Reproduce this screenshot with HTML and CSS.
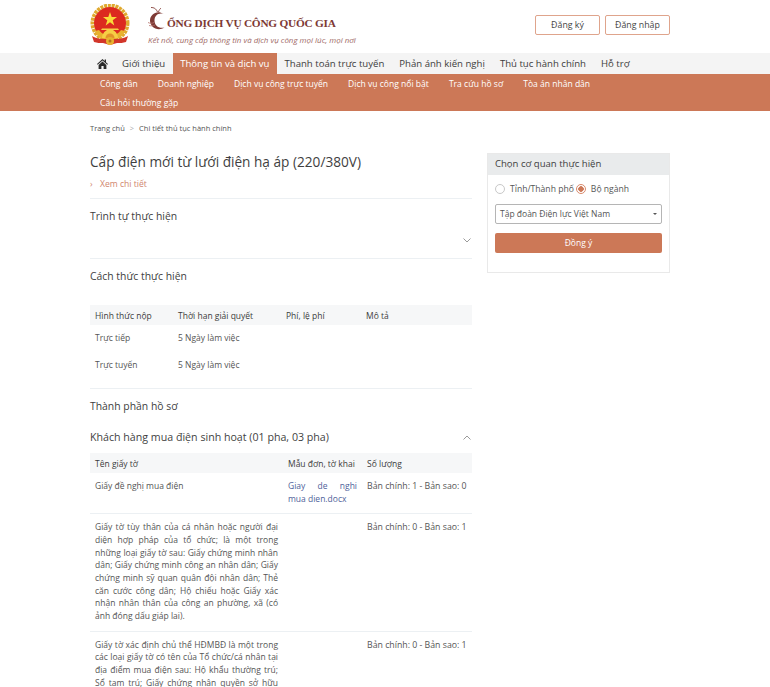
FILE: index.html
```html
<!DOCTYPE html>
<html lang="vi">
<head>
    <meta charset="UTF-8">
    <meta name="viewport" content="width=device-width, initial-scale=1.0">
    <title>Cổng Dịch vụ công Quốc gia</title>
    <link rel="stylesheet" href="styles.css">
</head>
<body>
<header class="top container">
    <div class="brand">
        <svg class="emblem" width="40" height="42" viewBox="0 0 40 42">
            <circle cx="20" cy="19" r="17.500" fill="none" stroke="#e0a92e" stroke-width="4" stroke-dasharray="3 .8"/>
            <circle cx="20" cy="19" r="16" fill="#dc2a1f"/>
            <path d="M5 27c2 5 6 9 15 9s13-4 15-9l-4-1c-2 3-5 5-11 5s-9-2-11-5z" fill="#e8b32f"/>
            <polygon points="20,8 21.700,13.100 27,13.100 22.700,16.300 24.300,21.400 20,18.300 15.700,21.400 17.300,16.300 13,13.100 18.300,13.100" fill="#f9dc3a"/>
            <path d="M12 34a8 8.500 0 0 1 16 0z" fill="#f6cf45"/>
            <path d="M15.500 34a4.500 4.500 0 0 1 9 0z" fill="#e2932a"/>
            <path d="M12 24.500h16l1 1.500H11z" fill="#f6cf45"/>
            <path d="M2 32c5 3 10 3 18 3s13 0 18-3l-2 6c-3 1-6 1-9 1l-7 2-7-2c-3 0-6 0-9-1z" fill="#d2362a"/>
            <circle cx="20" cy="37" r="4" fill="#e8b32f"/>
            <circle cx="20" cy="37" r="1.500" fill="#b5741c"/>
        </svg>
        <div class="brand-text">
            <div class="brand-name">
                <svg class="brand-mark" width="18" height="25" viewBox="0 0 18 25">
                    <path d="M15.500 7C9.500 2.500 2 7 2 13.500 2 20 9.500 25 16.500 20.500 11 22 6.500 18.500 6.500 13.500 6.500 8.500 10.500 5.500 15.500 7z" fill="#7e3a35"/>
                    <path d="M3 .5c3 0 5 1 6.500 4.500M13 1c-1 1-2 2-2.500 4" fill="none" stroke="#8f4f49" stroke-width="1"/>
                    <path d="M0 15.500c2 1 4 1 6 0M1 18.500c2 .5 4 .5 6-.5" fill="none" stroke="#b5706a" stroke-width=".8"/>
                </svg>
                <span>ỔNG DỊCH VỤ CÔNG QUỐC GIA</span>
            </div>
            <div class="brand-slogan">Kết nối, cung cấp thông tin và dịch vụ công mọi lúc, mọi nơi</div>
        </div>
    </div>
    <div class="auth">
        <a class="auth-btn" href="#">Đăng ký</a>
        <a class="auth-btn" href="#">Đăng nhập</a>
    </div>
</header>

<nav class="main-nav">
    <div class="container nav-row">
        <a class="nav-home" href="#">
            <svg width="11" height="10" viewBox="0 0 11 10"><path d="M5.5 0 0 5l.7.8L5.5 1.6l4.8 4.2.7-.8L9 3.2V.6H7.7V2zM1.6 6v4h2.8V7h2.2v3h2.8V6L5.500 2.600z" fill="#2b2b2b"/></svg>
        </a>
        <a href="#">Giới thiệu</a>
        <a class="active" href="#">Thông tin và dịch vụ</a>
        <a href="#">Thanh toán trực tuyến</a>
        <a href="#">Phản ánh kiến nghị</a>
        <a href="#">Thủ tục hành chính</a>
        <a href="#">Hỗ trợ</a>
    </div>
</nav>
<div class="sub-nav">
    <div class="container sub-row">
        <a href="#">Công dân</a>
        <a href="#">Doanh nghiệp</a>
        <a href="#">Dịch vụ công trực tuyến</a>
        <a href="#">Dịch vụ công nổi bật</a>
        <a href="#">Tra cứu hồ sơ</a>
        <a href="#">Tòa án nhân dân</a>
        <a class="sub-last" href="#">Câu hỏi thường gặp</a>
    </div>
</div>

<div class="container breadcrumb">
    <a href="#">Trang chủ</a><span class="sep">&gt;</span><a href="#">Chi tiết thủ tục hành chính</a>
</div>

<div class="container content">
    <main class="main-col">
        <h1>Cấp điện mới từ lưới điện hạ áp (220/380V)</h1>
        <a class="more" href="#"><span class="more-arrow">›</span>Xem chi tiết</a>

        <section class="block block-first">
            <h2>Trình tự thực hiện</h2>
            <div class="toggle-row">
                <svg width="8" height="5" viewBox="0 0 8 5"><path d="M.5.5 4 4 7.500.5" fill="none" stroke="#9a9a9a"/></svg>
            </div>
        </section>

        <section class="block">
            <h2>Cách thức thực hiện</h2>
            <table class="grid grid-ways">
                <thead>
                    <tr><th class="w1">Hình thức nộp</th><th class="w2">Thời hạn giải quyết</th><th class="w3">Phí, lệ phí</th><th>Mô tả</th></tr>
                </thead>
                <tbody>
                    <tr><td>Trực tiếp</td><td>5 Ngày làm việc</td><td></td><td></td></tr>
                    <tr><td>Trực tuyến</td><td>5 Ngày làm việc</td><td></td><td></td></tr>
                </tbody>
            </table>
        </section>

        <section class="block block-docs">
            <h2>Thành phần hồ sơ</h2>
            <div class="case-head">
                <h3>Khách hàng mua điện sinh hoạt (01 pha, 03 pha)</h3>
                <svg width="8" height="5" viewBox="0 0 8 5"><path d="M.5 4.500 4 1l3.500 3.500" fill="none" stroke="#9a9a9a"/></svg>
            </div>
            <table class="grid grid-docs">
                <thead>
                    <tr><th class="d1">Tên giấy tờ</th><th class="d2">Mẫu đơn, tờ khai</th><th>Số lượng</th></tr>
                </thead>
                <tbody>
                    <tr>
                        <td class="just">Giấy đề nghị mua điện</td>
                        <td><a class="file-link" href="#"><span class="file-first">Giay de nghi</span> mua dien.docx</a></td>
                        <td class="qty">Bản chính: 1 - Bản sao: 0</td>
                    </tr>
                    <tr>
                        <td class="just">Giấy tờ tùy thân của cá nhân hoặc người đại diện hợp pháp của tổ chức; là một trong những loại giấy tờ sau: Giấy chứng minh nhân dân; Giấy chứng minh công an nhân dân; Giấy chứng minh sỹ quan quân đội nhân dân; Thẻ căn cước công dân; Hộ chiếu hoặc Giấy xác nhận nhân thân của công an phường, xã (có ảnh đóng dấu giáp lai).</td>
                        <td></td>
                        <td class="qty">Bản chính: 0 - Bản sao: 1</td>
                    </tr>
                    <tr>
                        <td class="just">Giấy tờ xác định chủ thể HĐMBĐ là một trong các loại giấy tờ có tên của Tổ chức/cá nhân tại địa điểm mua điện sau: Hộ khẩu thường trú; Sổ tạm trú; Giấy chứng nhận quyền sở hữu nhà ở.</td>
                        <td></td>
                        <td class="qty">Bản chính: 0 - Bản sao: 1</td>
                    </tr>
                </tbody>
            </table>
        </section>
    </main>

    <aside class="side-card">
        <div class="side-title">Chọn cơ quan thực hiện</div>
        <div class="side-body">
            <div class="radios">
                <label class="radio"><span class="dot"></span>Tỉnh/Thành phố</label>
                <label class="radio"><span class="dot dot-on"></span>Bộ ngành</label>
            </div>
            <div class="select">Tập đoàn Điện lực Việt Nam<span class="caret"></span></div>
            <a class="agree" href="#">Đồng ý</a>
        </div>
    </aside>
</div>
</body>
</html>
```

FILE: styles.css
```css
:root {
    --brand-color: #cc7857;
    --text-color: #555;
    --line-color: #ecf0f3;
    --head-bg: #f6f7f8;
}

* {
    margin: 0;
    padding: 0;
    box-sizing: border-box;
}

html {
    height: 687px;
    overflow: hidden;
}

body {
    font-family: 'Open Sans', 'Noto Sans', sans-serif;
    font-size: 8.500px;
    color: var(--text-color);
    background: #fff;
}

a {
    color: inherit;
    text-decoration: none;
}

.container {
    width: 580px;
    margin-left: 90px;
}

/* header */
.top {
    height: 53px;
    display: flex;
    justify-content: space-between;
    align-items: flex-start;
}

.brand {
    display: flex;
    padding-top: 4px;
}

.emblem {
    margin-right: 18px;
}

.brand-text {
    padding-top: 3px;
}

.brand-name {
    display: flex;
    align-items: flex-end;
    height: 25px;
    font-family: 'Liberation Serif', serif;
    font-size: 11.300px;
    font-weight: 700;
    letter-spacing: -0.24px;
    color: #7e3a35;
}

.brand-name span {
    margin-bottom: 3px;
    white-space: nowrap;
}

.brand-mark {
    margin-right: 1px;
}

.brand-slogan {
    margin-top: 3px;
    font-size: 7.950px;
    font-style: italic;
    color: #a06a66;
    white-space: nowrap;
}

.auth {
    display: flex;
    gap: 5px;
    padding-top: 15px;
}

.auth-btn {
    width: 65px;
    height: 20px;
    border: 1px solid #dfa48c;
    border-radius: 2px;
    display: flex;
    align-items: center;
    justify-content: center;
    font-size: 8.800px;
    color: #444;
}

/* nav */
.main-nav {
    background: #f4f4f4;
    height: 21px;
}

.nav-row {
    display: flex;
    height: 21px;
    font-size: 9.600px;
    line-height: 21px;
    color: #3c3c3c;
    white-space: nowrap;
}

.nav-row a {
    padding: 0 7.500px;
}

.nav-row .nav-home {
    padding: 0 0 0 7px;
    width: 24.500px;
    display: flex;
    align-items: center;
}

.nav-row .active {
    background: var(--brand-color);
    color: #fff;
}

.sub-nav {
    background: var(--brand-color);
    height: 37px;
    padding-top: 1px;
}

.sub-row {
    display: flex;
    flex-wrap: wrap;
    font-size: 8.550px;
    line-height: 18.500px;
    color: #fff;
    padding-left: 10px;
    column-gap: 20px;
    white-space: nowrap;
}

.sub-last {
    flex-basis: 100%;
}

/* breadcrumb */
.breadcrumb {
    padding-top: 11px;
    height: 42px;
    font-size: 7.500px;
    line-height: 12px;
}

.sep {
    margin: 0 5px;
    color: #aaa;
}

/* content */
.content {
    display: flex;
    justify-content: space-between;
    align-items: flex-start;
}

.main-col {
    width: 382px;
}

h1 {
    font-size: 13.650px;
    font-weight: 400;
    line-height: 18px;
    color: #3f3f3f;
}

.more {
    display: block;
    margin-top: 6px;
    font-size: 8.600px;
    line-height: 14px;
    color: #d0866d;
}

.more-arrow {
    display: inline-block;
    width: 10px;
}

.block {
    border-top: 1px solid var(--line-color);
    padding-top: 10px;
}

.block-first {
    margin-top: 7px;
    height: 60px;
}

h2 {
    font-size: 10.400px;
    font-weight: 400;
    line-height: 14px;
    color: #3f3f3f;
}

.toggle-row {
    display: flex;
    justify-content: flex-end;
    padding: 15px 1px 0 0;
}

.grid {
    width: 382px;
    border-collapse: collapse;
    table-layout: fixed;
}

.grid th {
    background: var(--head-bg);
    font-weight: 400;
    text-align: left;
    color: #3c3c3c;
    padding: 0 5px;
    height: 20px;
    white-space: nowrap;
}

.grid td {
    vertical-align: top;
    padding: 0 5px;
    line-height: 12.670px;
}

.grid-ways {
    margin-top: 22px;
    margin-bottom: 9px;
}

.grid-ways td {
    height: 27px;
    padding-top: 7px;
}

.w1 { width: 83px; }
.w2 { width: 108px; }
.w3 { width: 80px; }

.case-head {
    display: flex;
    justify-content: space-between;
    align-items: center;
    margin-top: 17px;
    padding-right: 1px;
}

h3 {
    font-size: 10.650px;
    font-weight: 400;
    line-height: 14px;
    color: #3f3f3f;
}

.grid-docs {
    margin-top: 9px;
}

.d1 { width: 193px; }
.d2 { width: 79px; }

.grid-docs tbody tr {
    border-bottom: 1px solid var(--line-color);
}

.grid-docs td {
    padding-top: 7px;
    padding-bottom: 8px;
}

.grid-docs .qty {
    white-space: nowrap;
    font-size: 8.750px;
}

.just {
    text-align: justify;
}

.file-link {
    color: #4f5f9a;
}

.file-first {
    display: block;
    text-align: justify;
    text-align-last: justify;
}

/* side card */
.side-card {
    width: 183px;
    height: 120px;
    border: 1px solid #e9e9e9;
}

.side-title {
    height: 21px;
    background: #e9ebec;
    padding-left: 7px;
    font-size: 9.550px;
    line-height: 19px;
    color: #3f3f3f;
}

.side-body {
    padding: 0 7px;
}

.radios {
    display: flex;
    height: 28px;
    align-items: center;
    font-size: 8.600px;
    gap: 2px;
}

.radio {
    display: flex;
    align-items: center;
    gap: 5px;
}

.dot {
    width: 10px;
    height: 10px;
    border: 1px solid #c8c8c8;
    border-radius: 50%;
    background: #fff;
}

.dot-on {
    border-color: #d98a6c;
    background: radial-gradient(circle, var(--brand-color) 0 2.500px, #fff 3px);
}

.select {
    position: relative;
    height: 20px;
    margin-top: 1px;
    border: 1px solid #b5b5b5;
    border-radius: 2px;
    padding-left: 4px;
    line-height: 18px;
}

.caret {
    position: absolute;
    right: 4px;
    top: 8px;
    border: 2px solid transparent;
    border-top-color: #555;
}

.agree {
    display: block;
    height: 20px;
    margin-top: 9px;
    background: var(--brand-color);
    border-radius: 2px;
    color: #fff;
    text-align: center;
    line-height: 20px;
}
```
